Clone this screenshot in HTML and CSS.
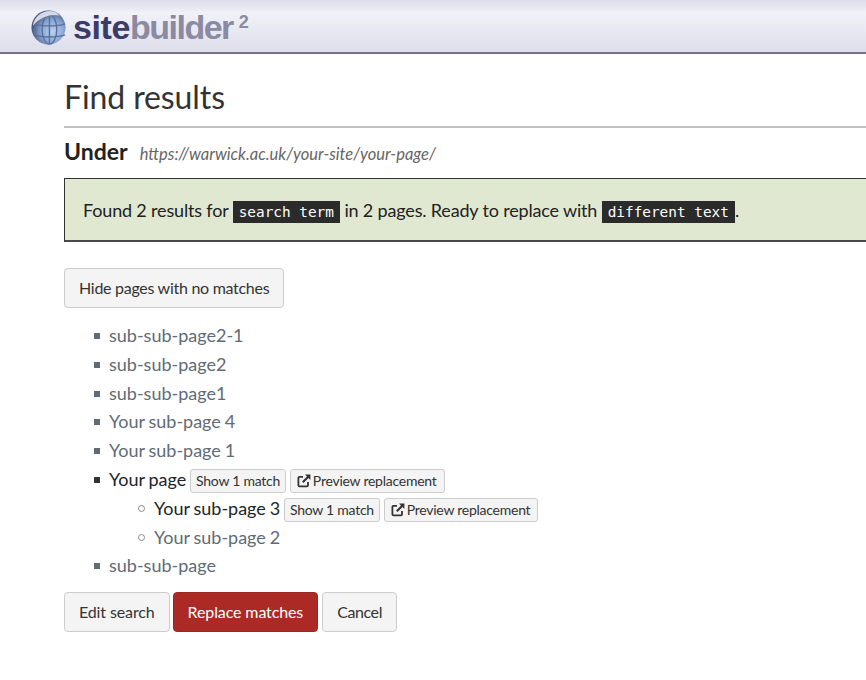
FILE: index.html
```html
<!DOCTYPE html>
<html lang="en">
<head>
    <meta charset="UTF-8">
    <meta name="viewport" content="width=device-width, initial-scale=1.0">
    <title>Find results | Sitebuilder</title>
    <link rel="stylesheet" href="styles.css">
</head>
<body>
    <header class="site-header">
        <svg class="globe" width="35" height="35" viewBox="0 0 38 38" aria-hidden="true">
            <defs>
                <radialGradient id="globe-fill" cx="0.62" cy="0.62" r="0.62">
                    <stop offset="0" stop-color="#b9d2f4"/>
                    <stop offset="0.55" stop-color="#86a6d4"/>
                    <stop offset="1" stop-color="#45567f"/>
                </radialGradient>
            </defs>
            <circle cx="19" cy="19" r="18.5" fill="url(#globe-fill)"/>
            <g fill="none" stroke="#5d6e96" stroke-width="1.5">
                <ellipse cx="20" cy="21" rx="8" ry="16"/>
                <path d="M3 15c9 3 25 3 34 0M3 27c9 3 25 3 34 0M20 5v32"/>
            </g>
            <path d="M2 17C3 8 11 1 20 1c5 0 9 2 11 5-9-2-20 1-29 11z" fill="#e4e6ee" opacity="0.9"/>
        </svg>
        <span class="logo-text"><b>site</b>builder<sup>2</sup></span>
    </header>

    <main class="main-container">
        <h1>Find results</h1>
        <h2>Under <small>https://warwick.ac.uk/your-site/your-page/</small></h2>

        <div class="alert">
            Found 2 results for <code>search term</code> in 2 pages. Ready to replace with <code>different text</code>.
        </div>

        <button class="btn toggle-btn">Hide pages with no matches</button>

        <ul class="page-list">
            <li class="muted">sub-sub-page2-1</li>
            <li class="muted">sub-sub-page2</li>
            <li class="muted">sub-sub-page1</li>
            <li class="muted">Your sub-page 4</li>
            <li class="muted">Your sub-page 1</li>
            <li>Your page
                <button class="btn btn-xs">Show 1 match</button>
                <button class="btn btn-xs btn-preview"><svg class="ext-icon" width="14" height="14" viewBox="0 0 14 14" aria-hidden="true"><path d="M11 8v3.2c0 .7-.5 1.2-1.2 1.2H2.6c-.7 0-1.2-.5-1.2-1.2V4c0-.7.5-1.2 1.2-1.2H6" fill="none" stroke="#333" stroke-width="1.8"/><path d="M8 .6h5.4V6l-1.9-1.9-5 5-1.5-1.5 5-5z" fill="#333"/></svg>Preview replacement</button>
                <ul>
                    <li>Your sub-page 3
                        <button class="btn btn-xs">Show 1 match</button>
                        <button class="btn btn-xs btn-preview"><svg class="ext-icon" width="14" height="14" viewBox="0 0 14 14" aria-hidden="true"><path d="M11 8v3.2c0 .7-.5 1.2-1.2 1.2H2.6c-.7 0-1.2-.5-1.2-1.2V4c0-.7.5-1.2 1.2-1.2H6" fill="none" stroke="#333" stroke-width="1.8"/><path d="M8 .6h5.4V6l-1.9-1.9-5 5-1.5-1.5 5-5z" fill="#333"/></svg>Preview replacement</button>
                    </li>
                    <li class="muted">Your sub-page 2</li>
                </ul>
            </li>
            <li class="muted">sub-sub-page</li>
        </ul>

        <div class="actions">
            <button class="btn">Edit search</button>
            <button class="btn btn-danger">Replace matches</button>
            <button class="btn btn-cancel">Cancel</button>
        </div>
    </main>
</body>
</html>
```

FILE: styles.css
```css
html, body {
    overflow-x: hidden;
}
body {
    font-family: 'Lato', Arial, sans-serif;
    font-size: 18px;
    line-height: 1.6;
    color: #212529;
    background: #fff;
    margin: 0;
}
.site-header {
    height: 52px;
    background: linear-gradient(180deg, #dcdcec 0%, #f1f1f8 25%, #dedeeb 100%);
    border-bottom: 2px solid #75718f;
    display: flex;
    align-items: center;
    padding-left: 31px;
    gap: 7px;
    box-sizing: content-box;
}
.globe {
    flex: none;
    margin-top: 2px;
    filter: blur(0.4px);
}
.logo-text {
    font-family: 'Liberation Sans', Arial, sans-serif;
    font-size: 34px;
    line-height: 1;
    letter-spacing: -1.5px;
    color: #8a8aa2;
    font-weight: 700;
    white-space: nowrap;
    margin-top: 2px;
}
.logo-text b {
    color: #3b3b68;
    letter-spacing: -0.4px;
}
.logo-text sup {
    font-size: 18px;
    font-weight: 700;
    letter-spacing: 0;
    line-height: 0;
    vertical-align: 11px;
    margin-left: 6px;
}
.main-container {
    margin: 0 -20px 0 64px;
    padding-top: 20px;
}
h1 {
    font-size: 32px;
    font-weight: 400;
    line-height: 46px;
    letter-spacing: -0.1px;
    margin: 0;
    padding-bottom: 6px;
    border-bottom: 2px solid #c2c2c2;
    color: #333;
}
h2 {
    font-size: 23px;
    font-weight: 700;
    line-height: 32px;
    margin: 7px 0 8px;
    color: #222;
}
h2 small {
    font-size: 16.5px;
    font-weight: 400;
    font-style: italic;
    color: #666;
    margin-left: 7px;
}
.alert {
    background: #e1e8d1;
    border: 1px solid #333;
    border-bottom: 2px solid #4a4a4a;
    padding: 17px 18px;
    height: 64px;
    box-sizing: border-box;
    line-height: 29px;
    margin-bottom: 26px;
    color: #222;
    letter-spacing: -0.17px;
}
code {
    font-family: 'DejaVu Sans Mono', monospace;
    font-size: 14.4px;
    letter-spacing: 0;
    background: #2b2b2b;
    color: #fff;
    padding: 3px 6px;
}
.btn {
    font-family: inherit;
    font-size: 16px;
    line-height: 24px;
    letter-spacing: -0.12px;
    color: #333;
    background: #f4f4f4;
    border: 1px solid #ccc;
    border-radius: 4px;
    padding: 7px 14px;
    cursor: pointer;
}
.toggle-btn {
    display: block;
    letter-spacing: -0.28px;
}
.btn-xs {
    font-size: 14px;
    line-height: 20px;
    letter-spacing: -0.25px;
    padding: 1px 5px;
    border-radius: 3px;
    vertical-align: 0;
}
.btn-preview {
    padding: 1px 7px 1px 6px;
}
.ext-icon {
    vertical-align: -2px;
    margin-right: 2px;
}
.btn-danger {
    background: #ab2a25;
    border-color: #9c2622;
    color: #fff;
}
.btn-cancel {
    letter-spacing: -0.4px;
    margin-left: 1px;
}
.page-list {
    list-style: none;
    margin: 13px 0 12px;
    padding-left: 45px;
}
.page-list ul {
    list-style: none;
    padding-left: 45px;
    margin: 0;
}
.page-list li {
    line-height: 28.8px;
    word-spacing: -0.8px;
    color: #212529;
}
.page-list li.muted {
    color: #5f6b76;
}
.page-list li::before {
    content: '';
    display: inline-block;
    width: 6px;
    height: 6px;
    margin-left: -15px;
    margin-right: 9px;
    vertical-align: 3px;
    background: #333;
}
.page-list li.muted::before {
    background: #5f6b76;
}
.page-list ul li::before {
    box-sizing: border-box;
    width: 7px;
    height: 7px;
    margin-left: -16px;
    background: none;
    border: 1px solid #888;
    border-radius: 50%;
}
.page-list ul li.muted::before {
    background: none;
}
.actions {
    display: flex;
    gap: 3px;
}
```
